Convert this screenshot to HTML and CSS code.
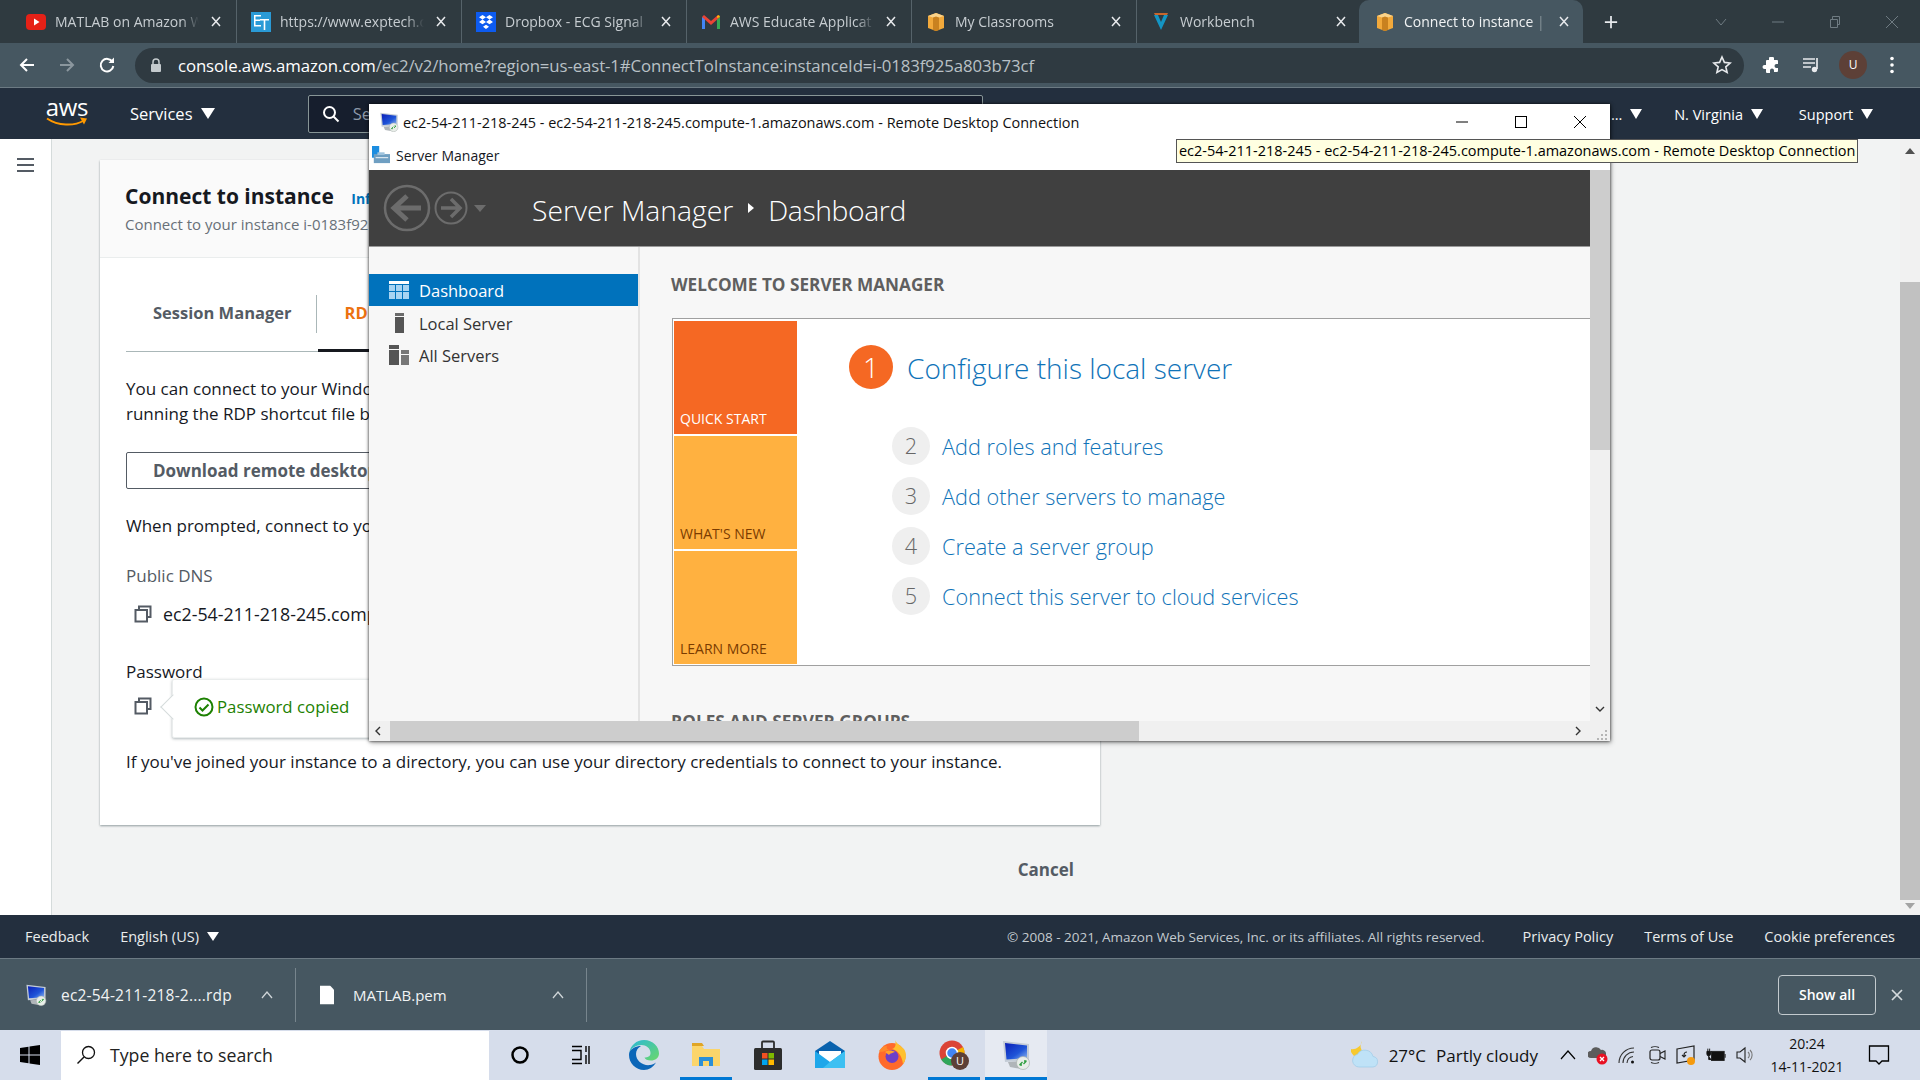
FILE: index.html
```html
<!DOCTYPE html>
<html lang="en">
<head>
    <meta charset="UTF-8">
    <title>Connect to instance | EC2 Management Console</title>
    <link rel="stylesheet" href="styles.css">
</head>
<body>

    <!-- shared icons -->
    <svg class="defs" aria-hidden="true">
        <defs>
            <linearGradient id="rdp-screen" x1="0" y1="0" x2="1" y2="1">
                <stop offset="0" stop-color="#0b1fb8"/>
                <stop offset=".6" stop-color="#1f55d8"/>
                <stop offset="1" stop-color="#8fb8ee"/>
            </linearGradient>
        </defs>
        <symbol id="rdp-icon" viewBox="0 0 30 30">
            <path d="M2 1l26 3v16L4 22z" fill="#c4ccd6"/>
            <path d="M4 3l22 2.500v12.500L5.500 19.500z" fill="url(#rdp-screen)"/>
            <path d="M7 22l12-1 3 3-2 5-11-2z" fill="#b0b5b9"/>
            <circle cx="22" cy="23" r="6.500" fill="#e9eee9" stroke="#a9b0ad" stroke-width=".7"/>
            <path d="M18.500 25l3-3M21 25l-2.500 0M25.500 21l-3 3M23 21l2.500 0" stroke="#2e9e3f" stroke-width="1.300" fill="none"/>
        </symbol>
        <symbol id="x-icon" viewBox="0 0 10 10">
            <path d="M1 .5l8 9M9 .5l-8 9" fill="none" stroke="currentColor" stroke-width="1.500"/>
        </symbol>
        <symbol id="aws-cube" viewBox="0 0 20 20">
            <path d="M10 1l8 3v12l-8 3-8-3V4z" fill="#f2a93b"/>
            <path d="M7 3l3-1 3 1v15l-3 1-3-1z" fill="#c9811f"/>
            <path d="M2 4l5 1.500L10 4.500l3 1 5-1.500-8-3z" fill="#fbd38a"/>
        </symbol>
        <symbol id="copy-icon" viewBox="0 0 18 18">
            <path d="M5 5V1.500h11.500V12H13" fill="none" stroke="#545b64" stroke-width="2"/>
            <rect x="1.500" y="5" width="11.500" height="11.500" fill="none" stroke="#545b64" stroke-width="2"/>
        </symbol>
    </svg>

    <!-- Browser tabs -->
    <div class="tabstrip">
        <div class="tab">
            <svg class="favicon" viewBox="0 0 20 20"><rect x="0" y="2" width="20" height="16" rx="4" fill="#e62117"/><path d="M8 6.500l5.500 3.500-5.500 3.500z" fill="#fff"/></svg>
            <span class="tab-title">MATLAB on Amazon W</span><svg class="tab-close"><use href="#x-icon"/></svg>
        </div>
        <div class="tab">
            <svg class="favicon" viewBox="0 0 20 20"><rect width="20" height="20" fill="#2a9ad6"/><path d="M3 3h7v1.500H4.500v3H9V9H4.500v4H10v1.500H3zM9 7h9v1.500h-3.700V18h-1.600V8.500H9z" fill="#fff"/></svg>
            <span class="tab-title">https://www.exptech.c</span><svg class="tab-close"><use href="#x-icon"/></svg>
        </div>
        <div class="tab">
            <svg class="favicon" viewBox="0 0 20 20"><rect width="20" height="20" fill="#0d5bf0"/><path d="M6.500 3l3.500 2.300-3.500 2.300L3 5.300zM13.500 3L17 5.300l-3.500 2.300L10 5.300zM6.500 7.600L10 9.900l-3.500 2.300L3 9.900zM13.500 7.600L17 9.900l-3.500 2.300L10 9.900zM10 12.800l3 2-3 2.200-3-2.200z" fill="#fff"/></svg>
            <span class="tab-title">Dropbox - ECG Signal</span><svg class="tab-close"><use href="#x-icon"/></svg>
        </div>
        <div class="tab">
            <svg class="favicon" viewBox="0 0 20 20"><path d="M1 17V5l3 1v11z" fill="#4285f4"/><path d="M16 17V6l3-1v12z" fill="#34a853"/><path d="M1 5l2-2 7 6 7-6 2 2-9 8z" fill="#ea4335"/><path d="M16 6l3-1-1-2-2 1z" fill="#fbbc04"/></svg>
            <span class="tab-title">AWS Educate Applicat</span><svg class="tab-close"><use href="#x-icon"/></svg>
        </div>
        <div class="tab">
            <svg class="favicon"><use href="#aws-cube"/></svg>
            <span class="tab-title">My Classrooms</span><svg class="tab-close"><use href="#x-icon"/></svg>
        </div>
        <div class="tab">
            <svg class="favicon" viewBox="0 0 20 20"><path d="M3 3l7 15 7-15h-4l-3 7-3-7z" fill="#1495c4"/><path d="M3 1h14l-1 2H4z" fill="#c8662c"/></svg>
            <span class="tab-title">Workbench</span><svg class="tab-close"><use href="#x-icon"/></svg>
        </div>
        <div class="tab tab-active">
            <svg class="favicon"><use href="#aws-cube"/></svg>
            <span class="tab-title">Connect to instance |</span><svg class="tab-close"><use href="#x-icon"/></svg>
        </div>
        <svg class="new-tab" viewBox="0 0 16 16"><path d="M8 1v14M1 8h14" stroke="#e8eaed" stroke-width="2"/></svg>
        <div class="window-buttons">
            <svg viewBox="0 0 12 12"><path d="M1 3l5 6 5-6" fill="none" stroke="#6f7b82" stroke-width="1"/></svg>
            <svg viewBox="0 0 12 12"><path d="M0 6h12" stroke="#6f7b82" stroke-width="1"/></svg>
            <svg viewBox="0 0 12 12"><path d="M1.500 3.500h7v8h-7zM3.500 3.500V.5h7v8h-2" fill="none" stroke="#6f7b82" stroke-width="1"/></svg>
            <svg viewBox="0 0 12 12"><path d="M0 0l12 12M12 0L0 12" stroke="#6f7b82" stroke-width="1"/></svg>
        </div>
    </div>

    <!-- Address bar -->
    <div class="toolbar">
        <svg class="tool-icon" viewBox="0 0 18 18"><path d="M16 9H3M9 3L3 9l6 6" fill="none" stroke="#fff" stroke-width="2"/></svg>
        <svg class="tool-icon" viewBox="0 0 18 18"><path d="M2 9h13M9 3l6 6-6 6" fill="none" stroke="#8b979e" stroke-width="2"/></svg>
        <svg class="tool-icon" viewBox="0 0 18 18"><path d="M14.500 6A6.300 6.300 0 1 0 15.300 10" fill="none" stroke="#fff" stroke-width="2"/><path d="M16 1.500V7h-5.500z" fill="#fff"/></svg>
        <div class="address">
            <svg class="lock" viewBox="0 0 12 14"><path d="M3 6V4a3 3 0 0 1 6 0v2" fill="none" stroke="#c4cacd" stroke-width="1.500"/><rect x="1" y="6" width="10" height="8" rx="1" fill="#c4cacd"/></svg>
            <span class="url"><b>console.aws.amazon.com</b>/ec2/v2/home?region=us-east-1#ConnectToInstance:instanceId=i-0183f925a803b73cf</span>
            <svg class="star" viewBox="0 0 20 20"><path d="M10 2l2.400 5.400 5.800.6-4.400 3.800 1.300 5.700L10 14.600l-5.100 2.900 1.300-5.700L1.800 8l5.800-.6z" fill="none" stroke="#e8eaed" stroke-width="1.600"/></svg>
        </div>
        <svg class="ext-icon" viewBox="0 0 20 20"><path d="M8 2h3a1.500 1.500 0 0 1 1 1v2h3a1 1 0 0 1 1 1v3h-1.500a2 2 0 0 0 0 4H16v3a1 1 0 0 1-1 1h-3v-1.500a2 2 0 0 0-4 0V18H5a1 1 0 0 1-1-1v-3H2.500a2 2 0 0 1 0-4H4V6a1 1 0 0 1 1-1h2V3a1 1 0 0 1 1-1z" fill="#fff"/></svg>
        <svg class="ext-icon" viewBox="0 0 20 20"><path d="M1 4h12M1 8h12M1 12h8" stroke="#e8eaed" stroke-width="1.700"/><path d="M15 3v11" stroke="#e8eaed" stroke-width="1.700"/><circle cx="12.500" cy="14.500" r="2.700" fill="#e8eaed"/></svg>
        <span class="avatar">U</span>
        <svg class="menu-dots" viewBox="0 0 4 18"><circle cx="2" cy="2.500" r="1.800" fill="#fff"/><circle cx="2" cy="9" r="1.800" fill="#fff"/><circle cx="2" cy="15.500" r="1.800" fill="#fff"/></svg>
    </div>

    <!-- AWS console nav -->
    <nav class="aws-nav">
        <div class="aws-logo">
            <span>aws</span>
            <svg viewBox="0 0 42 10"><path d="M1 1.500c11 7.500 27 8 37 2" fill="none" stroke="#f90" stroke-width="2"/><path d="M34 .5l7 1-3 6z" fill="#f90"/></svg>
        </div>
        <span class="nav-services">Services <i class="caret"></i></span>
        <div class="nav-search">
            <svg viewBox="0 0 18 18"><circle cx="7.500" cy="7.500" r="5.500" fill="none" stroke="#fff" stroke-width="2"/><path d="M11.500 11.500l5 5" stroke="#fff" stroke-width="2"/></svg>
            <span>Search for services</span>
        </div>
        <div class="nav-right">
            <span>... <i class="caret"></i></span>
            <span>N. Virginia <i class="caret"></i></span>
            <span>Support <i class="caret"></i></span>
        </div>
    </nav>

    <!-- Console page -->
    <div class="page">
        <aside class="side-rail">
            <div class="hamburger"><span></span><span></span><span></span></div>
        </aside>
        <main class="main">
            <section class="card">
                <header class="card-head">
                    <h1>Connect to instance <a>Info</a></h1>
                    <p>Connect to your instance i-0183f925a803b73cf using any of these options</p>
                </header>
                <div class="card-body">
                    <div class="tabs">
                        <span class="con-tab">Session Manager</span>
                        <span class="con-tab con-tab-active">RDP client</span>
                    </div>
                    <p class="para">You can connect to your Windows instance using a remote desktop client of your choice, and by downloading and<br>running the RDP shortcut file below:</p>
                    <button class="btn-outline">Download remote desktop file</button>
                    <p class="para prompted">When prompted, connect to your instance using the following username and password:</p>
                    <div class="field-label">Public DNS</div>
                    <div class="field-value">
                        <svg class="copy"><use href="#copy-icon"/></svg>
                        ec2-54-211-218-245.compute-1.amazonaws.com
                    </div>
                    <div class="field-label password-label">Password</div>
                    <div class="password-row">
                        <svg class="copy"><use href="#copy-icon"/></svg>
                        <div class="copied">
                            <svg viewBox="0 0 20 20"><circle cx="10" cy="10" r="8.500" fill="none" stroke="#1d8102" stroke-width="2"/><path d="M5.500 10.500l3 3 6-6" fill="none" stroke="#1d8102" stroke-width="2"/></svg>
                            Password copied
                        </div>
                    </div>
                    <p class="para joined">If you've joined your instance to a directory, you can use your directory credentials to connect to your instance.</p>
                </div>
            </section>
            <div class="card-actions"><span>Cancel</span></div>
        </main>
        <div class="page-scroll">
            <i class="arrow-up"></i>
            <div class="page-thumb"></div>
            <i class="arrow-down"></i>
        </div>
    </div>

    <!-- Console footer -->
    <footer class="aws-footer">
        <span>Feedback</span>
        <span class="lang">English (US) <i class="caret"></i></span>
        <span class="copyright">© 2008 - 2021, Amazon Web Services, Inc. or its affiliates. All rights reserved.</span>
        <span>Privacy Policy</span>
        <span>Terms of Use</span>
        <span>Cookie preferences</span>
    </footer>

    <!-- Downloads shelf -->
    <div class="downloads">
        <div class="dl-item dl-rdp">
            <svg class="dl-icon"><use href="#rdp-icon"/></svg>
            <span class="dl-name dl-name-long">ec2-54-211-218-2....rdp</span>
            <svg class="dl-caret" viewBox="0 0 12 8"><path d="M1 7l5-6 5 6" fill="none" stroke="#cfd5d8" stroke-width="1.300"/></svg>
        </div>
        <div class="dl-item dl-pem">
            <svg class="dl-icon-file" viewBox="0 0 14 18"><path d="M0 0h10l4 4v14H0z" fill="#fff"/></svg>
            <span class="dl-name">MATLAB.pem</span>
            <svg class="dl-caret" viewBox="0 0 12 8"><path d="M1 7l5-6 5 6" fill="none" stroke="#cfd5d8" stroke-width="1.300"/></svg>
        </div>
        <button class="show-all">Show all</button>
        <svg class="dl-close" viewBox="0 0 12 12"><path d="M1 1l10 10M11 1L1 11" stroke="#d5dadd" stroke-width="1.700"/></svg>
    </div>

    <!-- Windows taskbar -->
    <div class="taskbar">
        <svg class="start" viewBox="0 0 20 20"><path d="M0 3l8.500-1.200V9.500H0zM9.500 1.600L20 0v9.500H9.500zM0 10.500h8.500v7.700L0 17zM9.500 10.500H20V20L9.500 18.400z" fill="#000"/></svg>
        <div class="search-box">
            <svg viewBox="0 0 20 20"><circle cx="12.500" cy="7.500" r="6" fill="none" stroke="#111" stroke-width="1.300"/><path d="M8 12l-6.500 6.500" stroke="#111" stroke-width="1.500"/></svg>
            <span>Type here to search</span>
        </div>
        <div class="task-btn task-small"><svg viewBox="0 0 20 20"><circle cx="10" cy="10" r="7.500" fill="none" stroke="#000" stroke-width="2.500"/></svg></div>
        <div class="task-btn task-small"><svg viewBox="2 0 20 20"><path d="M1 1.500h11M1 18.500h11M1 5.500h10v9H1M16 1v6M19 1v18M16 10v9" fill="none" stroke="#000" stroke-width="1.400"/></svg></div>
        <div class="task-btn">
            <svg viewBox="0 0 30 30">
                <defs>
                    <linearGradient id="edge-top" x1="0" y1="0" x2="1" y2="1"><stop offset="0" stop-color="#2bb8d8"/><stop offset="1" stop-color="#6bd86a"/></linearGradient>
                </defs>
                <path d="M15 0c9 0 15 6.500 15 13.500 0 4.500-4 7-8 7-3.500 0-6-1-6.500-3 3 0 6-1 6-4.500C21.500 8 17 5 12.500 5 7 5 2 8.500 .3 12.500 1.500 5.500 7.500 0 15 0z" fill="url(#edge-top)"/>
                <path d="M.3 12.500C2 8.500 7 6 12 6c-3 1.500-5 4.500-5 8 0 7 7 12 14 11 2-.3 4-1 6-2.500C24.500 27 20 30 15 30 6.500 30 0 23 0 15c0-.8.1-1.700.3-2.500z" fill="#0b66b8"/>
            </svg>
        </div>
        <div class="task-btn task-open">
            <svg viewBox="0 0 30 30"><path d="M1 6h10l2 3h16v17H1z" fill="#fbd56b"/><path d="M1 3h10l2 3H1z" fill="#e0a526"/><path d="M8 26v-9h14v9h-4v-5h-6v5z" fill="#2b8fd8"/></svg>
        </div>
        <div class="task-btn">
            <svg viewBox="0 0 30 30"><path d="M9 9V2.500a1 1 0 0 1 1-1h10a1 1 0 0 1 1 1V9" fill="none" stroke="#2d2d2d" stroke-width="1.800"/><rect x="1" y="8" width="28" height="22" rx="1.500" fill="#2d2d2d"/><rect x="9" y="13" width="5.500" height="5.500" fill="#f25022"/><rect x="15.500" y="13" width="5.500" height="5.500" fill="#7fba00"/><rect x="9" y="19.500" width="5.500" height="5.500" fill="#00a4ef"/><rect x="15.500" y="19.500" width="5.500" height="5.500" fill="#ffb900"/></svg>
        </div>
        <div class="task-btn">
            <svg viewBox="0 0 30 30"><path d="M0 11L15 1l15 10v17H0z" fill="#0a62ad"/><path d="M4 11h22v7l-11 5-11-5z" fill="#fff"/><path d="M0 11l15 11 15-11v17H0z" fill="#1ea7ea"/><path d="M15 22l15-11v17H8z" fill="#3dc0f2"/></svg>
        </div>
        <div class="task-btn">
            <svg viewBox="0 0 30 30"><circle cx="15" cy="16.500" r="13.500" fill="#ff6a2b"/><path d="M18 0c1 3 6 6 9 9 3 4 2.500 11-1 15-1-9-6-14-11-15 4-1 4-5 3-9z" fill="#ffc02e"/><path d="M2 11c2-3 4-5 8-5-1 2 0 3 2 4-5 1-8 3-10 1z" fill="#ff8a2b"/><circle cx="15" cy="16.500" r="6.500" fill="#6d3fc8"/><path d="M8 12c3-2 7-2 10 0-2 1-5 1-6 3-1-1-3-2-4-3z" fill="#ffa22e"/></svg>
        </div>
        <div class="task-btn task-open">
            <svg viewBox="0 0 30 30"><circle cx="13" cy="13" r="12.500" fill="#db4437"/><path d="M13 13L2.200 19.500A12.500 12.500 0 0 0 13 25.500z" fill="#2fa65a"/><path d="M13 13l11-6A12.500 12.500 0 0 1 18 24.500z" fill="#f4b400"/><circle cx="13" cy="13" r="5.500" fill="#4285f4" stroke="#fff" stroke-width="1.500"/><circle cx="21" cy="21" r="9" fill="#5d4037"/><text x="21" y="25" font-size="11" fill="#fff" text-anchor="middle" font-family="Open Sans">U</text></svg>
        </div>
        <div class="task-btn task-open task-active">
            <svg><use href="#rdp-icon"/></svg>
        </div>
        <div class="tray">
            <svg class="weather" viewBox="0 0 28 30"><path d="M11 1a9 9 0 0 0 2 12l-10 3C.5 13-1 11 0 9c4 1 10-2 11-8z" fill="#f7c92f"/><path d="M8 27a6.500 6.500 0 0 1-1.500-12.800 8.500 8.500 0 0 1 15.500 2.300A5.300 5.300 0 0 1 22 27z" fill="#bfe2f7" stroke="#9ccbe8" stroke-width=".7"/></svg>
            <span class="temp">27°C</span>
            <span class="sky">Partly cloudy</span>
            <svg class="tray-chevron" viewBox="0 0 16 10"><path d="M1 9l7-8 7 8" fill="none" stroke="#000" stroke-width="1.200"/></svg>
            <svg class="tray-icon" viewBox="0 0 20 20"><path d="M3 13a3.500 3.500 0 0 1 0-7 5.500 5.500 0 0 1 10-1 4 4 0 0 1 5 3v3l-6 2z" fill="#5c5c5c"/><circle cx="14" cy="14" r="5.500" fill="#e81123"/><path d="M12 12l4 4M16 12l-4 4" stroke="#fff" stroke-width="1.300"/></svg>
            <svg class="tray-icon" viewBox="0 0 20 20"><path d="M2 18A15 15 0 0 1 17 3M6 18A11 11 0 0 1 17 7M10 18a7 7 0 0 1 6-6.500" fill="none" stroke="#333" stroke-width="1.100"/><circle cx="15.500" cy="17" r="1.500" fill="#111"/></svg>
            <svg class="tray-icon" viewBox="0 0 20 20"><rect x="3" y="5" width="10" height="10" rx="2" fill="none" stroke="#222" stroke-width="1.200"/><path d="M13 8.500l5-2.500v8l-5-2.500M4 2.500c2-1 6-1 8 0M4 17.500c2 1 6 1 8 0" fill="none" stroke="#222" stroke-width="1.100"/></svg>
            <svg class="tray-icon" viewBox="0 0 20 20"><path d="M1 4l17-3v14l-17 3z" fill="none" stroke="#222" stroke-width="1.200"/><path d="M11 7a3 3 0 0 0-3 3v2M6 10l2 2 2-2" fill="none" stroke="#222" stroke-width="1.100"/><circle cx="15" cy="16" r="4" fill="#f59a0e"/></svg>
            <svg class="tray-icon" viewBox="0 0 22 20"><rect x="6" y="6" width="14" height="10" fill="#111" stroke="#222"/><path d="M21 9v4" stroke="#222" stroke-width="1.200"/><path d="M1 6h4v3a2 2 0 0 1-4 0zM2 3v3M4 3v3M3 11v4h3" fill="#111" stroke="#111" stroke-width="1"/></svg>
            <svg class="tray-icon" viewBox="0 0 20 20"><path d="M2 7h3l5-4v14l-5-4H2z" fill="none" stroke="#222" stroke-width="1.100"/><path d="M13 7a4 4 0 0 1 0 6M15 5a7 7 0 0 1 0 10" fill="none" stroke="#777" stroke-width="1.100"/></svg>
            <div class="clock"><span>20:24</span><span>14-11-2021</span></div>
            <svg class="notify" viewBox="0 0 22 22"><path d="M1.500 2h19v15H14l-3 3-3-3H1.500z" fill="none" stroke="#000" stroke-width="1.300"/></svg>
        </div>
    </div>

    <!-- Remote Desktop window, sits over the browser -->
    <div class="rdp-window">
        <div class="rdp-title">
            <svg class="rdp-title-icon"><use href="#rdp-icon"/></svg>
            <span>ec2-54-211-218-245 - ec2-54-211-218-245.compute-1.amazonaws.com - Remote Desktop Connection</span>
            <div class="rdp-controls">
                <svg viewBox="0 0 12 12"><path d="M0 6h12" stroke="#000"/></svg>
                <svg viewBox="0 0 12 12"><rect x=".5" y=".5" width="11" height="11" fill="none" stroke="#000"/></svg>
                <svg viewBox="0 0 12 12"><path d="M0 0l12 12M12 0L0 12" stroke="#000"/></svg>
            </div>
        </div>
        <div class="sm-title">
            <svg viewBox="0 0 20 20"><rect x="0" y="0" width="8" height="13" fill="#1c8de0"/><rect x="2" y="9" width="18" height="10" fill="#6f9fc2"/><rect x="6" y="7" width="8" height="3" fill="#9fc3dd"/><path d="M4 13h14" stroke="#fff"/></svg>
            <span>Server Manager</span>
        </div>
        <div class="rdp-viewport">
            <div class="rdp-content">
                <div class="sm-header">
                    <svg class="nav-back" viewBox="0 0 48 48"><circle cx="24" cy="24" r="22" fill="none" stroke="#6c6c6c" stroke-width="2.500"/><path d="M38 24H12M24 12L11 24l13 12" fill="none" stroke="#6c6c6c" stroke-width="5"/></svg>
                    <svg class="nav-forward" viewBox="0 0 34 34"><circle cx="17" cy="17" r="15.500" fill="none" stroke="#6c6c6c" stroke-width="2"/><path d="M7 17h19M17 8l9 9-9 9" fill="none" stroke="#6c6c6c" stroke-width="3.500"/></svg>
                    <i class="nav-drop"></i>
                    <span class="crumb">Server Manager</span>
                    <i class="crumb-sep"></i>
                    <span class="crumb">Dashboard</span>
                </div>
                <div class="sm-body">
                    <aside class="sm-side">
                        <div class="sm-link sm-link-active">
                            <svg viewBox="0 0 20 18"><path d="M0 0h20v3H0z" fill="#fff"/><path d="M0 4h6v6H0zM7 4h6v6H7zM14 4h6v6h-6zM0 11h6v7H0zM7 11h6v7H7zM14 11h6v7h-6z" fill="#a8d4f2"/></svg>
                            Dashboard
                        </div>
                        <div class="sm-link">
                            <svg viewBox="0 0 20 20"><path d="M6 0h9v3H6z" fill="#6b6b6b"/><path d="M6 4h9v16H6z" fill="#555"/></svg>
                            Local Server
                        </div>
                        <div class="sm-link">
                            <svg viewBox="0 0 20 20"><path d="M0 0h10v4H0zM0 5h10v15H0z" fill="#555"/><path d="M12 5h8v4h-8z" fill="#777"/><path d="M12 10h8v10h-8z" fill="#777"/></svg>
                            All Servers
                        </div>
                    </aside>
                    <div class="sm-main">
                        <h2 class="sm-heading">WELCOME TO SERVER MANAGER</h2>
                        <div class="welcome">
                            <div class="tiles">
                                <div class="tile tile-orange">QUICK START</div>
                                <div class="tile">WHAT'S NEW</div>
                                <div class="tile">LEARN MORE</div>
                            </div>
                            <div class="steps">
                                <div class="step-main"><span class="step-one">1</span><a>Configure this local server</a></div>
                                <div class="step"><span class="step-num">2</span><a>Add roles and features</a></div>
                                <div class="step"><span class="step-num">3</span><a>Add other servers to manage</a></div>
                                <div class="step"><span class="step-num">4</span><a>Create a server group</a></div>
                                <div class="step"><span class="step-num">5</span><a>Connect this server to cloud services</a></div>
                            </div>
                        </div>
                        <h2 class="sm-heading roles">ROLES AND SERVER GROUPS</h2>
                    </div>
                </div>
            </div>
            <div class="v-scroll">
                <div class="v-thumb"></div>
                <svg class="v-down" viewBox="0 0 10 6"><path d="M1 1l4 4 4-4" fill="none" stroke="#333" stroke-width="1.400"/></svg>
            </div>
        </div>
        <div class="h-scroll">
            <svg class="h-left" viewBox="0 0 6 10"><path d="M5 1L1 5l4 4" fill="none" stroke="#333" stroke-width="1.400"/></svg>
            <div class="h-thumb"></div>
            <svg class="h-right" viewBox="0 0 6 10"><path d="M1 1l4 4-4 4" fill="none" stroke="#333" stroke-width="1.400"/></svg>
            <svg class="grip" viewBox="0 0 12 12"><path d="M8 2h2v2H8zM4 6h2v2H4zM8 6h2v2H8zM0 10h2v2H0zM4 10h2v2H4zM8 10h2v2H8z" fill="#b5b5b5"/></svg>
        </div>
    </div>

    <div class="rdp-tooltip">ec2-54-211-218-245 - ec2-54-211-218-245.compute-1.amazonaws.com - Remote Desktop Connection</div>

</body>
</html>
```

FILE: styles.css
```css
* {
    box-sizing: border-box;
}

html, body {
    margin: 0;
    width: 1920px;
    height: 1080px;
    overflow: hidden;
}

body {
    position: relative;
    display: flex;
    flex-direction: column;
    font-family: "Open Sans", "Noto Sans", sans-serif;
    color: #16191f;
    background: #f2f3f3;
}

.defs {
    position: absolute;
    width: 0;
    height: 0;
}

/* Browser tabs */
.tabstrip {
    height: 43px;
    flex: none;
    display: flex;
    align-items: stretch;
    padding-left: 12px;
    background: #2f3a40;
    color: #c7cdd1;
    font-size: 14px;
}

.tab {
    width: 225px;
    display: flex;
    align-items: center;
    padding: 0 15px 0 14px;
    border-right: 1px solid #56636a;
}

.tab:nth-child(6) {
    border-right-color: transparent;
}

.tab-active {
    width: 224px;
    margin-left: -3px;
    padding: 0 14px 0 16px;
    background: #465761;
    color: #f1f3f4;
    border-right: none;
    border-radius: 10px 10px 0 0;
}

.favicon {
    width: 20px;
    height: 20px;
    flex: none;
    margin-right: 9px;
}

.tab-title {
    flex: 1;
    min-width: 0;
    white-space: nowrap;
    overflow: hidden;
    -webkit-mask-image: linear-gradient(to right, #000 88%, transparent);
    mask-image: linear-gradient(to right, #000 88%, transparent);
}

.tab-close {
    width: 10px;
    height: 11px;
    flex: none;
    margin-left: 12px;
    color: #e8eaed;
}

.new-tab {
    width: 14px;
    height: 14px;
    align-self: center;
    margin-left: 21px;
}

.window-buttons {
    margin-left: auto;
    display: flex;
    align-items: center;
    gap: 45px;
    padding-right: 22px;
}

.window-buttons svg {
    width: 12px;
    height: 12px;
}

/* Address bar */
.toolbar {
    height: 45px;
    flex: none;
    display: flex;
    align-items: center;
    padding-left: 18px;
    background: #465761;
    border-bottom: 1px solid #6c7a83;
}

.tool-icon {
    width: 18px;
    height: 18px;
    margin-right: 22px;
}

.address {
    width: 1609px;
    height: 35px;
    margin-left: -3px;
    display: flex;
    align-items: center;
    padding: 0 12px;
    border-radius: 18px;
    background: #2f3a41;
    color: #b9c1c6;
    font-size: 16.800px;
}

.lock {
    width: 12px;
    height: 14px;
    margin-left: 3px;
    margin-right: 16px;
}

.url {
    letter-spacing: -0.1px;
    white-space: nowrap;
}

.url b {
    font-weight: 400;
    color: #fff;
}

.star {
    width: 20px;
    height: 20px;
    margin-left: auto;
}

.ext-icon {
    width: 20px;
    height: 20px;
    margin-left: 18px;
}

.ext-icon + .ext-icon {
    margin-left: 20px;
}

.avatar {
    width: 28px;
    height: 28px;
    margin-left: 17px;
    border-radius: 50%;
    background: #5d4037;
    color: #fff;
    font-size: 12px;
    text-align: center;
    line-height: 28px;
}

.menu-dots {
    width: 4px;
    height: 18px;
    margin-left: 23px;
}

/* AWS nav */
.aws-nav {
    height: 51px;
    flex: none;
    display: flex;
    align-items: center;
    background: #232f3e;
    color: #fff;
    font-size: 16.500px;
}

.aws-logo {
    width: 42px;
    margin-left: 46px;
    margin-top: -4px;
    display: flex;
    flex-direction: column;
    align-items: center;
    line-height: 20px;
    font-size: 24px;
    font-weight: 400;
    letter-spacing: -0.3px;
}

.aws-logo svg {
    width: 42px;
    height: 10px;
    margin-top: 0;
}

.caret {
    display: inline-block;
    width: 0;
    height: 0;
    margin-left: 4px;
    vertical-align: 1px;
    border-left: 7px solid transparent;
    border-right: 7px solid transparent;
    border-top: 11px solid #fff;
}

.nav-services {
    margin-left: 42px;
}

.nav-search {
    width: 675px;
    height: 38px;
    margin-left: 93px;
    display: flex;
    align-items: center;
    padding-left: 13px;
    gap: 13px;
    border: 1px solid #879596;
    border-radius: 2px;
    background: #161e2d;
    color: #8d99a8;
}

.nav-search svg {
    width: 18px;
    height: 18px;
}

.nav-right {
    margin-left: auto;
    display: flex;
    gap: 36px;
    padding: 2px 47px 0 0;
    font-size: 14.500px;
}

.nav-right span:first-child {
    margin-right: -4px;
}

.nav-right .caret {
    border-left-width: 6px;
    border-right-width: 6px;
    border-top-width: 10px;
}

/* Console page */
.page {
    flex: 1;
    min-height: 0;
    display: flex;
}

.side-rail {
    width: 52px;
    flex: none;
    background: #fff;
    border-right: 1px solid #d5dbdb;
    padding: 19px 0 0 17px;
}

.hamburger span {
    display: block;
    width: 17px;
    height: 2px;
    margin-bottom: 4px;
    background: #545b64;
}

.main {
    flex: 1;
    padding: 21px 0 0 48px;
}

.card {
    width: 1000px;
    height: 665px;
    background: #fff;
    box-shadow: 0 1px 2px rgba(0, 28, 36, 0.4);
}

.card-head {
    height: 98px;
    padding: 21px 0 0 25px;
    background: #fafafa;
    border-bottom: 1px solid #eaeded;
}

.card-head h1 {
    margin: 0;
    font-size: 21px;
    line-height: 30px;
    font-weight: 700;
}

.card-head h1 a {
    margin-left: 12px;
    font-size: 14px;
    color: #0073bb;
}

.card-head p {
    margin: 0;
    font-size: 15px;
    line-height: 20px;
    color: #687078;
    white-space: nowrap;
}

.card-body {
    padding: 0 26px;
}

.tabs {
    height: 94px;
    padding-top: 37px;
    display: flex;
    border-bottom: 1px solid #aab7b8;
    font-size: 16.500px;
    font-weight: 700;
    color: #545b64;
}

.con-tab {
    height: 38px;
    padding: 8px 24px 8px 27px;
    line-height: 20px;
}

.con-tab-active {
    position: relative;
    height: 57px;
    padding-left: 29px;
    color: #ec7211;
    white-space: nowrap;
}

.con-tab-active::before {
    content: "";
    position: absolute;
    left: 0;
    top: 0;
    width: 1px;
    height: 38px;
    background: #aab7b8;
}

.con-tab-active::after {
    content: "";
    position: absolute;
    left: 2px;
    right: 0;
    bottom: 0;
    height: 3px;
    background: #16191f;
}

.para {
    margin: 0;
    font-size: 17px;
    line-height: 25px;
    white-space: nowrap;
}

.tabs + .para {
    margin-top: 24px;
}

.btn-outline {
    display: block;
    width: 400px;
    height: 37px;
    margin-top: 26px;
    padding: 0 0 0 26px;
    text-align: left;
    background: #fff;
    border: 1px solid #545b64;
    border-radius: 2px;
    color: #545b64;
    font-family: inherit;
    font-size: 17px;
    font-weight: 700;
}

.prompted {
    margin-top: 24px;
}

.field-label {
    margin-top: 25px;
    font-size: 17px;
    line-height: 25px;
    color: #545b64;
}

.field-value {
    margin-top: 13px;
    display: flex;
    align-items: center;
    gap: 11px;
    padding-left: 8px;
    height: 25px;
    font-size: 17.800px;
    white-space: nowrap;
}

.copy {
    width: 18px;
    height: 18px;
    flex: none;
}

.password-label {
    margin-top: 33px;
    color: #16191f;
}

.password-row {
    height: 59px;
    margin-top: -5px;
    display: flex;
    align-items: center;
    padding-left: 8px;
}

.password-row .copy {
    margin-top: -6px;
}

.copied {
    position: relative;
    width: 300px;
    height: 59px;
    margin-left: 20px;
    display: flex;
    align-items: center;
    gap: 3px;
    padding: 0 0 4px 21px;
    background: #fff;
    border: 1px solid #eaeded;
    border-radius: 2px;
    box-shadow: 0 1px 3px rgba(0, 28, 36, 0.3);
    color: #1d8102;
    font-size: 16.800px;
    white-space: nowrap;
}

.copied::before {
    content: "";
    position: absolute;
    left: -9px;
    top: 18px;
    width: 17px;
    height: 17px;
    background: #fff;
    border-left: 1px solid #d5dbdb;
    border-bottom: 1px solid #d5dbdb;
    transform: rotate(45deg);
}

.copied svg {
    width: 20px;
    height: 20px;
    flex: none;
}

.joined {
    margin-top: 11px;
}

.card-actions {
    width: 1000px;
    padding: 33px 26px 0 0;
    text-align: right;
    font-size: 17px;
    font-weight: 700;
    color: #545b64;
}

.page-scroll {
    width: 20px;
    flex: none;
    display: flex;
    flex-direction: column;
    align-items: center;
    padding: 9px 0 6px;
    background: #f1f1f1;
}

.page-thumb {
    flex: none;
    width: 100%;
    height: 618px;
    margin-top: 128px;
    background: #c1c1c1;
}

.arrow-up, .arrow-down {
    width: 0;
    height: 0;
    border-left: 5px solid transparent;
    border-right: 5px solid transparent;
}

.arrow-up {
    border-bottom: 6px solid #505050;
}

.arrow-down {
    margin-top: 3px;
    border-top: 6px solid #a3a3a3;
}

/* Console footer */
.aws-footer {
    height: 44px;
    flex: none;
    display: flex;
    align-items: center;
    gap: 31px;
    padding: 0 25px;
    background: #232f3e;
    border-bottom: 1px solid #6c7a83;
    color: #eaeded;
    font-size: 14.500px;
}

.lang .caret {
    border-left-width: 6px;
    border-right-width: 6px;
    border-top-width: 9px;
}

.copyright {
    margin-left: auto;
    margin-right: 7px;
    font-size: 13.500px;
    color: #c4cbd0;
}

/* Downloads shelf */
.downloads {
    height: 71px;
    flex: none;
    display: flex;
    align-items: center;
    background: #465761;
    color: #f1f3f4;
    font-size: 15px;
}

.dl-item {
    height: 54px;
    display: flex;
    align-items: center;
    border-right: 1px solid #77858d;
}

.dl-rdp {
    width: 296px;
    padding-left: 25px;
}

.dl-pem {
    width: 291px;
    padding-left: 24px;
}

.dl-icon {
    width: 22px;
    height: 24px;
    margin-right: 14px;
}

.dl-icon-file {
    width: 14px;
    height: 18px;
    margin-right: 19px;
    transform: scaleY(1.050);
}

.dl-name {
    white-space: nowrap;
}

.dl-name-long {
    font-size: 15.500px;
    letter-spacing: 0.2px;
}

.dl-caret {
    width: 12px;
    height: 8px;
    margin-left: auto;
    margin-right: 22px;
}

.show-all {
    width: 98px;
    height: 40px;
    margin-left: auto;
    background: #465761;
    border: 1px solid #c3cace;
    border-radius: 4px;
    color: #fff;
    font-family: inherit;
    font-size: 14px;
    font-weight: 600;
}

.dl-close {
    width: 12px;
    height: 12px;
    margin: 0 17px 0 15px;
}

/* Windows taskbar */
.taskbar {
    height: 50px;
    flex: none;
    display: flex;
    align-items: center;
    background: #d6ddeb;
    padding-left: 20px;
}

.start {
    width: 20px;
    height: 20px;
    margin-right: 21px;
}

.search-box {
    width: 428px;
    height: 49px;
    display: flex;
    align-items: center;
    gap: 14px;
    padding-left: 15px;
    background: #fff;
    font-size: 17.700px;
    color: #222;
}

.search-box svg {
    width: 20px;
    height: 20px;
}

.task-btn {
    position: relative;
    width: 62px;
    height: 50px;
    display: flex;
    align-items: center;
    justify-content: center;
}

.task-btn svg {
    width: 30px;
    height: 30px;
    flex: none;
}

.task-small svg {
    width: 20px;
    height: 20px;
}

.task-open::after {
    content: "";
    position: absolute;
    left: 5px;
    right: 5px;
    bottom: 0;
    height: 3px;
    background: #0078d4;
}

.task-active {
    background: #e6eaf2;
}

.task-active::after {
    left: 0;
    right: 0;
}

.tray {
    margin-left: auto;
    display: flex;
    align-items: center;
    font-size: 17px;
    color: #111;
}

.weather {
    width: 28px;
    height: 30px;
    margin-right: 10px;
}

.temp {
    margin-right: 10px;
}

.sky {
    margin-right: 22px;
}

.tray-chevron {
    width: 16px;
    height: 10px;
    margin-right: 2px;
}

.tray-icon {
    width: 20px;
    height: 20px;
    margin-left: 9.500px;
}

.clock {
    width: 90px;
    margin-left: 7px;
    display: flex;
    flex-direction: column;
    align-items: center;
    gap: 1px;
    font-size: 14px;
    line-height: 22px;
}

.notify {
    width: 22px;
    height: 22px;
    margin: 0 30px 0 16px;
}

/* Remote Desktop window */
.rdp-window {
    position: absolute;
    left: 369px;
    top: 104px;
    width: 1241px;
    height: 637px;
    display: flex;
    flex-direction: column;
    background: #fff;
    box-shadow: 0 0 3px rgba(0, 0, 0, 0.8), 1px 2px 5px rgba(0, 0, 0, 0.3);
}

.rdp-title {
    height: 36px;
    flex: none;
    display: flex;
    align-items: center;
    padding-left: 10px;
    font-size: 14.470px;
    color: #111;
    white-space: nowrap;
}

.rdp-title-icon {
    width: 20px;
    height: 20px;
    margin-right: 4px;
}

.rdp-controls {
    margin-left: auto;
    display: flex;
    gap: 47px;
    padding-right: 24px;
}

.rdp-controls svg {
    width: 12px;
    height: 12px;
}

.sm-title {
    height: 30px;
    flex: none;
    display: flex;
    align-items: center;
    padding-left: 3px;
    gap: 6px;
    font-size: 14px;
}

.sm-title svg {
    width: 18px;
    height: 18px;
}

.rdp-viewport {
    flex: 1;
    min-height: 0;
    display: flex;
}

.rdp-content {
    flex: 1;
    min-width: 0;
    overflow: hidden;
    display: flex;
    flex-direction: column;
}

.sm-header {
    height: 77px;
    flex: none;
    display: flex;
    align-items: center;
    padding-left: 14px;
    background: #404040;
    border-bottom: 1px solid #9a9a9a;
    color: #fff;
    font-size: 28.300px;
    font-weight: 300;
}

.nav-back {
    width: 48px;
    height: 48px;
}

.nav-forward {
    width: 34px;
    height: 34px;
    margin-left: 3px;
}

.nav-drop {
    width: 0;
    height: 0;
    margin-left: 6px;
    border-left: 6px solid transparent;
    border-right: 6px solid transparent;
    border-top: 7px solid #6c6c6c;
}

.crumb {
    margin-top: 4px;
}

.crumb:first-of-type {
    margin-left: 46px;
}

.crumb:last-child {
    letter-spacing: -0.4px;
}

.crumb-sep {
    width: 0;
    height: 0;
    margin: 0 14px 0 15px;
    border-top: 5px solid transparent;
    border-bottom: 5px solid transparent;
    border-left: 6px solid #fff;
}

.sm-body {
    flex: 1;
    min-height: 0;
    display: flex;
    background: #f7f7f7;
}

.sm-side {
    width: 271px;
    flex: none;
    padding-top: 27px;
    border-right: 2px solid #e3e3e3;
}

.sm-link {
    width: 269px;
    height: 32px;
    display: flex;
    align-items: center;
    gap: 10px;
    padding-left: 20px;
    font-size: 16.500px;
    color: #333;
}

.sm-link-active {
    background: #0072bc;
    color: #fff;
}

.sm-link-active + .sm-link {
    margin-top: 1px;
}

.sm-link svg {
    width: 20px;
    height: 20px;
    flex: none;
}

.sm-main {
    flex: 1;
    min-width: 0;
    padding: 26px 0 0 31px;
    overflow: hidden;
}

.sm-heading {
    margin: 0;
    font-size: 17.200px;
    line-height: 24px;
    font-weight: 700;
    color: #5f5f5f;
    white-space: nowrap;
}

.welcome {
    height: 348px;
    margin: 21px 0 0 1px;
    display: flex;
    padding: 2px 0 0 1px;
    background: #fff;
    border: 1px solid #a0a0a0;
    border-right: none;
}

.tiles {
    width: 123px;
    flex: none;
    display: flex;
    flex-direction: column;
    gap: 2px;
}

.tile {
    height: 113px;
    display: flex;
    align-items: flex-end;
    padding: 0 0 6px 6px;
    background: #ffb140;
    color: #7a3b00;
    font-size: 14px;
    line-height: 18px;
}

.tile-orange {
    background: #f56823;
    color: #fff;
}

.steps {
    padding: 24px 0 0 52px;
}

.step-main {
    display: flex;
    align-items: center;
    gap: 14px;
    height: 44px;
    margin-bottom: 38px;
    font-size: 28px;
    font-weight: 300;
    color: #0f73b8;
}

.step-main a {
    margin-top: 2px;
}

.step-one {
    width: 44px;
    height: 44px;
    border-radius: 50%;
    background: #f56823;
    color: #fff;
    text-align: center;
    line-height: 44px;
}

.step {
    height: 38px;
    margin: 0 0 12px 43px;
    display: flex;
    align-items: center;
    gap: 12px;
    font-size: 21.700px;
    font-weight: 300;
    color: #0f73b8;
}

.step-num {
    width: 38px;
    height: 38px;
    border-radius: 50%;
    background: #efefef;
    color: #666;
    text-align: center;
    line-height: 38px;
}

.roles {
    margin-top: 44px;
}

.v-scroll {
    width: 20px;
    flex: none;
    display: flex;
    flex-direction: column;
    align-items: center;
    background: #f0f0f0;
}

.v-thumb {
    width: 100%;
    height: 280px;
    background: #cdcdcd;
}

.v-down {
    width: 10px;
    height: 6px;
    margin-top: auto;
    margin-bottom: 9px;
}

.h-scroll {
    height: 20px;
    flex: none;
    display: flex;
    align-items: center;
    background: #f0f0f0;
}

.h-left {
    width: 6px;
    height: 10px;
    margin: 0 9px 0 6px;
}

.h-thumb {
    width: 749px;
    height: 100%;
    background: #cdcdcd;
}

.h-right {
    width: 6px;
    height: 10px;
    margin-left: auto;
}

.grip {
    width: 12px;
    height: 12px;
    margin: 6px 1px 0 16px;
}

.rdp-tooltip {
    position: absolute;
    left: 1176px;
    top: 139px;
    width: 682px;
    height: 24px;
    padding-left: 2px;
    background: #ffffe1;
    border: 1px solid #555;
    color: #000;
    font-size: 14.470px;
    line-height: 22px;
    white-space: nowrap;
    overflow: hidden;
}
```
